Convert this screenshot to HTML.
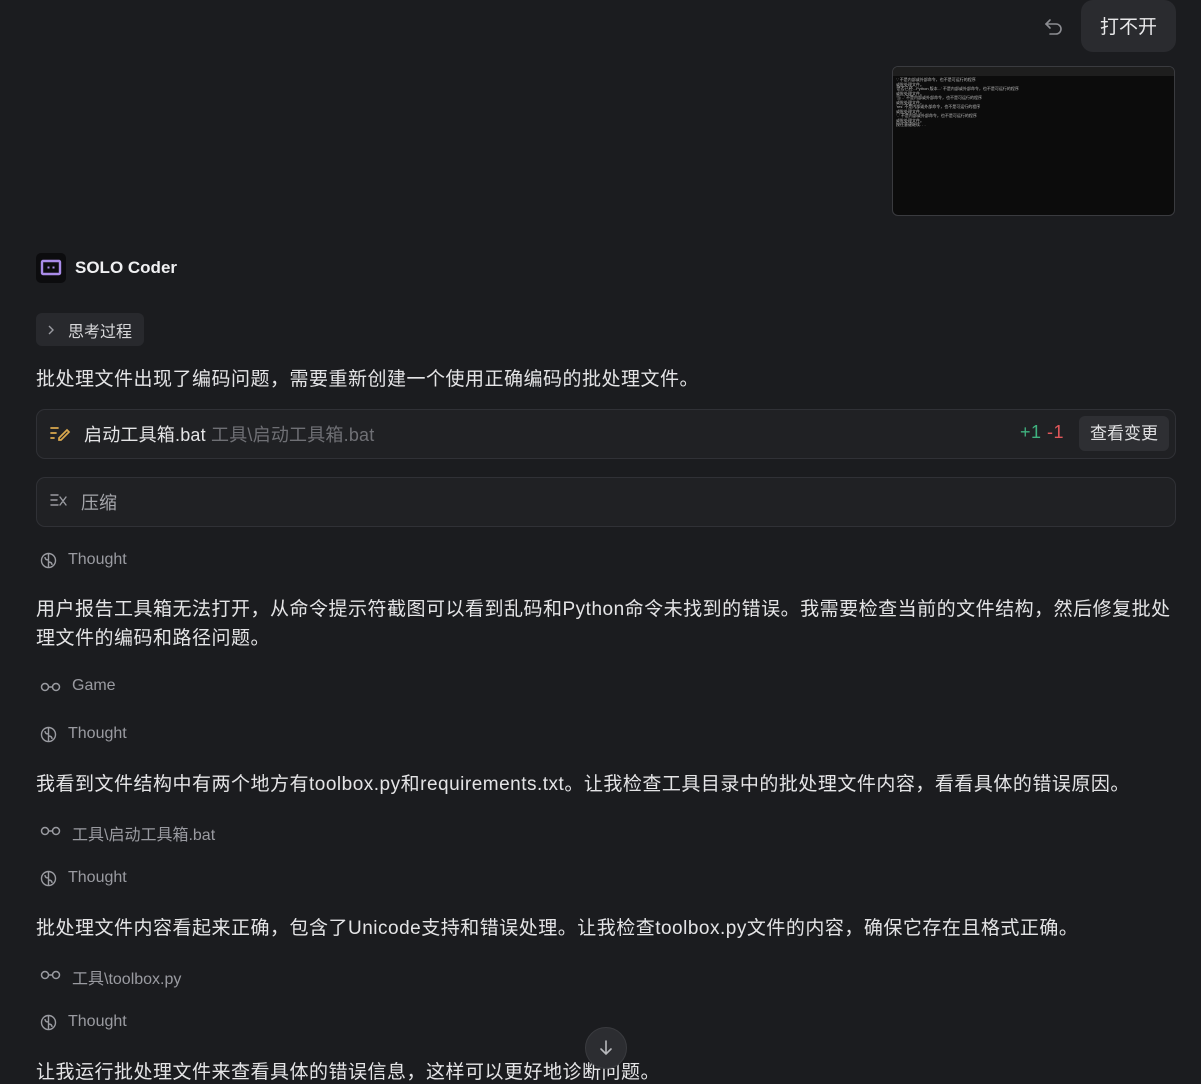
<!DOCTYPE html>
<html><head><meta charset="utf-8"><style>
html,body{margin:0;padding:0;width:1201px;height:1083px;overflow:hidden;background:#1b1c1f;font-family:"Liberation Sans","Noto Sans CJK SC",sans-serif;color:#e6e6e8}
.a{position:absolute;white-space:nowrap}
.body{font-size:19px;color:#e4e4e6;letter-spacing:0.5px}
.meta{font-size:16px;color:#9a9ba1}
.box{position:absolute;left:36px;width:1138px;height:48px;border:1px solid #303136;border-radius:9px;background:#202124}
</style></head><body>
<svg class="a" style="left:1043px;top:16px" width="22" height="22" viewBox="0 0 22 22" fill="none" stroke="#8c8d92" stroke-width="1.6" stroke-linecap="round"><path d="M7 4 L3 8 L7 12"/><path d="M3 8 H13 a5 5 0 0 1 0 10 H7"/></svg>
<div class="a" style="left:1081px;top:0;width:95px;height:52px;background:#2a2b2f;border-radius:12px;font-size:19px;line-height:56px;text-align:center;color:#e8e8ea">打不开</div>
<div class="a" style="left:892px;top:66px;width:281px;height:148px;border:1px solid #3a3b3f;border-radius:6px;background:#0c0c0c;overflow:hidden">
<div style="height:9px;background:#1e1e1e"></div>
<div style="font-size:4px;line-height:4.5px;color:#bbb;padding:2px 3px;white-space:pre">'.' 不是内部或外部命令，也不是可运行的程序
或批处理文件。
'是否已经...Python 版本...' 不是内部或外部命令，也不是可运行的程序
或批处理文件。
'当 ..' 不是内部或外部命令，也不是可运行的程序
或批处理文件。
'res' 不是内部或外部命令，也不是可运行的程序
或批处理文件。
'..' 不是内部或外部命令，也不是可运行的程序
或批处理文件。
按任意键继续. . .</div></div>
<div class="a" style="left:36px;top:253px;width:30px;height:30px;background:#0c0c0e;border-radius:5px"></div>
<svg class="a" style="left:40px;top:258px" width="22" height="20" viewBox="0 0 22 20"><rect x="2" y="3" width="18" height="13" rx="1" fill="none" stroke="#a98be8" stroke-width="2.4"/><rect x="7.5" y="8.5" width="2" height="2" fill="#a98be8"/><rect x="12.5" y="8.5" width="2" height="2" fill="#a98be8"/></svg>
<div class="a" style="left:75px;top:258px;font-size:17px;font-weight:bold;color:#f0f0f2">SOLO Coder</div>
<div class="a" style="left:36px;top:313px;width:108px;height:33px;background:#28292d;border-radius:6px"></div>
<svg class="a" style="left:46px;top:324px" width="10" height="12" viewBox="0 0 10 12" fill="none" stroke="#9a9ba1" stroke-width="1.4"><path d="M3 2 L7 6 L3 10"/></svg>
<div class="a" style="left:68px;top:318px;font-size:16px;color:#d8d8da">思考过程</div>
<div class="a body" style="left:36px;top:364px">批处理文件出现了编码问题，需要重新创建一个使用正确编码的批处理文件。</div>
<div class="box" style="top:409px"></div>
<svg class="a" style="left:49px;top:424px" width="22" height="18" viewBox="0 0 22 18" fill="none" stroke="#d9a84e" stroke-width="1.7" stroke-linecap="round"><path d="M2 4 H9 M2 9 H7 M2 14 H5"/><path d="M10 14 L18 6 L20 8 L12 16 H10 Z"/></svg>
<div class="a body" style="left:84px;top:421px;font-size:18px;letter-spacing:0.2px">启动工具箱.bat <span style="color:#6f7075">工具\启动工具箱.bat</span></div>
<div class="a" style="left:1020px;top:422px;font-size:18px;letter-spacing:0.5px"><span style="color:#3fb27f">+1</span> <span style="color:#e0575a">-1</span></div>
<div class="a" style="left:1079px;top:416px;width:90px;height:35px;background:#2e2f33;border-radius:6px;font-size:17px;line-height:36px;text-align:center;color:#e0e0e2">查看变更</div>
<div class="box" style="top:477px"></div>
<svg class="a" style="left:50px;top:493px" width="18" height="16" viewBox="0 0 18 16" fill="none" stroke="#9a9ba1" stroke-width="1.4" stroke-linecap="round"><path d="M1 2 H8 M1 7 H7 M1 12 H8 M10 4 L16 12 M16 4 L10 12"/></svg>
<div class="a" style="left:81px;top:489px;font-size:18px;color:#a6a7ac">压缩</div>
<svg class="a" style="left:40px;top:552px" width="17" height="17" viewBox="0 0 17 17" fill="none" stroke="#9a9ba1" stroke-width="1.4"><circle cx="8.5" cy="8.5" r="7"/><path d="M8.5 1.5 V15.5 M8.5 8 Q5 8 5 5 M8.5 10 Q12 10 12 13"/></svg>
<div class="a meta" style="left:68px;top:551px">Thought</div>
<div class="a body" style="left:36px;top:595px;line-height:29px">用户报告工具箱无法打开，从命令提示符截图可以看到乱码和Python命令未找到的错误。我需要检查当前的文件结构，然后修复批处<br>理文件的编码和路径问题。</div>
<svg class="a" style="left:40px;top:682px" width="21" height="10" viewBox="0 0 21 10" fill="none" stroke="#9a9ba1" stroke-width="1.5"><circle cx="5" cy="5" r="3.5"/><circle cx="16" cy="5" r="3.5"/><path d="M8.5 5 H12.5"/></svg>
<div class="a meta" style="left:72px;top:677px">Game</div>
<svg class="a" style="left:40px;top:726px" width="17" height="17" viewBox="0 0 17 17" fill="none" stroke="#9a9ba1" stroke-width="1.4"><circle cx="8.5" cy="8.5" r="7"/><path d="M8.5 1.5 V15.5 M8.5 8 Q5 8 5 5 M8.5 10 Q12 10 12 13"/></svg>
<div class="a meta" style="left:68px;top:725px">Thought</div>
<div class="a body" style="left:36px;top:769px">我看到文件结构中有两个地方有toolbox.py和requirements.txt。让我检查工具目录中的批处理文件内容，看看具体的错误原因。</div>
<svg class="a" style="left:40px;top:826px" width="21" height="10" viewBox="0 0 21 10" fill="none" stroke="#9a9ba1" stroke-width="1.5"><circle cx="5" cy="5" r="3.5"/><circle cx="16" cy="5" r="3.5"/><path d="M8.5 5 H12.5"/></svg>
<div class="a meta" style="left:72px;top:821px">工具\启动工具箱.bat</div>
<svg class="a" style="left:40px;top:870px" width="17" height="17" viewBox="0 0 17 17" fill="none" stroke="#9a9ba1" stroke-width="1.4"><circle cx="8.5" cy="8.5" r="7"/><path d="M8.5 1.5 V15.5 M8.5 8 Q5 8 5 5 M8.5 10 Q12 10 12 13"/></svg>
<div class="a meta" style="left:68px;top:869px">Thought</div>
<div class="a body" style="left:36px;top:913px">批处理文件内容看起来正确，包含了Unicode支持和错误处理。让我检查toolbox.py文件的内容，确保它存在且格式正确。</div>
<svg class="a" style="left:40px;top:970px" width="21" height="10" viewBox="0 0 21 10" fill="none" stroke="#9a9ba1" stroke-width="1.5"><circle cx="5" cy="5" r="3.5"/><circle cx="16" cy="5" r="3.5"/><path d="M8.5 5 H12.5"/></svg>
<div class="a meta" style="left:72px;top:965px">工具\toolbox.py</div>
<svg class="a" style="left:40px;top:1014px" width="17" height="17" viewBox="0 0 17 17" fill="none" stroke="#9a9ba1" stroke-width="1.4"><circle cx="8.5" cy="8.5" r="7"/><path d="M8.5 1.5 V15.5 M8.5 8 Q5 8 5 5 M8.5 10 Q12 10 12 13"/></svg>
<div class="a meta" style="left:68px;top:1013px">Thought</div>
<div class="a body" style="left:36px;top:1057px">让我运行批处理文件来查看具体的错误信息，这样可以更好地诊断问题。</div>
<div class="a" style="left:585px;top:1027px;width:40px;height:40px;border-radius:50%;background:#2c2d31;border:1px solid #3a3b3f"></div>
<svg class="a" style="left:596px;top:1038px" width="20" height="20" viewBox="0 0 20 20" fill="none" stroke="#b8b9bd" stroke-width="1.6" stroke-linecap="round"><path d="M10 3 V16 M5 11 L10 16 L15 11"/></svg>
</body></html>
